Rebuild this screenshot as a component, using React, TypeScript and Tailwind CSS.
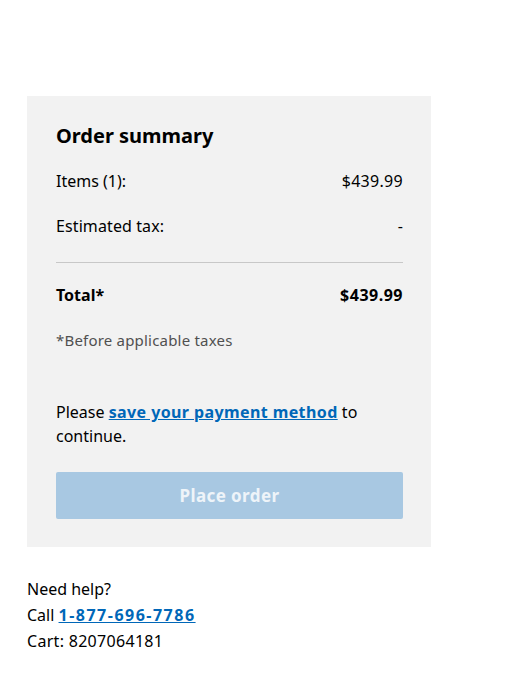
import React from "react";

export default function App() {
  return (
    <div className="min-h-screen bg-white text-black" style={{ fontFamily: '"Noto Sans", "Open Sans", sans-serif' }}>
      <div className="pt-[96px] pl-[27px] pb-[28px]">
        {/* Summary panel */}
        <div className="w-[404px] bg-[#f2f2f2] pl-[29px] pr-[28px] pt-[26px] pb-[28px]">
          <h2 className="text-[20px] leading-[28px] font-bold">Order summary</h2>

          <div className="mt-[19px] flex justify-between text-[16px] leading-[24px]">
            <span>Items (1):</span>
            <span className="tracking-[0.3px]">$439.99</span>
          </div>
          <div className="mt-[21px] flex justify-between text-[16px] leading-[24px]">
            <span className="tracking-[0.1px]">Estimated tax:</span>
            <span>-</span>
          </div>

          <div className="mt-[24px] h-px bg-[#c8c8c8]" />

          <div className="mt-[20px] flex justify-between text-[16px] leading-[24px] font-bold">
            <span>Total*</span>
            <span className="tracking-[0.5px]">$439.99</span>
          </div>

          <p className="mt-[22px] text-[15px] leading-[22px] text-[#505050] tracking-[0.2px]">*Before applicable taxes</p>

          <p className="mt-[49px] text-[16px] leading-[24px]">
            Please{" "}
            <a href="#" className="font-bold text-[#0067b8] underline tracking-[0.4px]">
              save your payment method
            </a>{" "}
            to continue.
          </p>

          <button
            disabled
            className="mt-[24px] h-[47px] w-full rounded-[2px] bg-[#a8c8e2] text-[17px] font-bold text-[#eef4f9] tracking-[0.4px]"
          >
            Place order
          </button>
        </div>

        {/* Help */}
        <div className="mt-[29px] text-[16px] leading-[26px]">
          <p>Need help?</p>
          <p>
            Call{" "}
            <a href="#" className="font-bold text-[#0067b8] underline tracking-[1.5px]">
              1-877-696-7786
            </a>
          </p>
          <p className="tracking-[0.3px]">Cart: 8207064181</p>
        </div>
      </div>
    </div>
  );
}
